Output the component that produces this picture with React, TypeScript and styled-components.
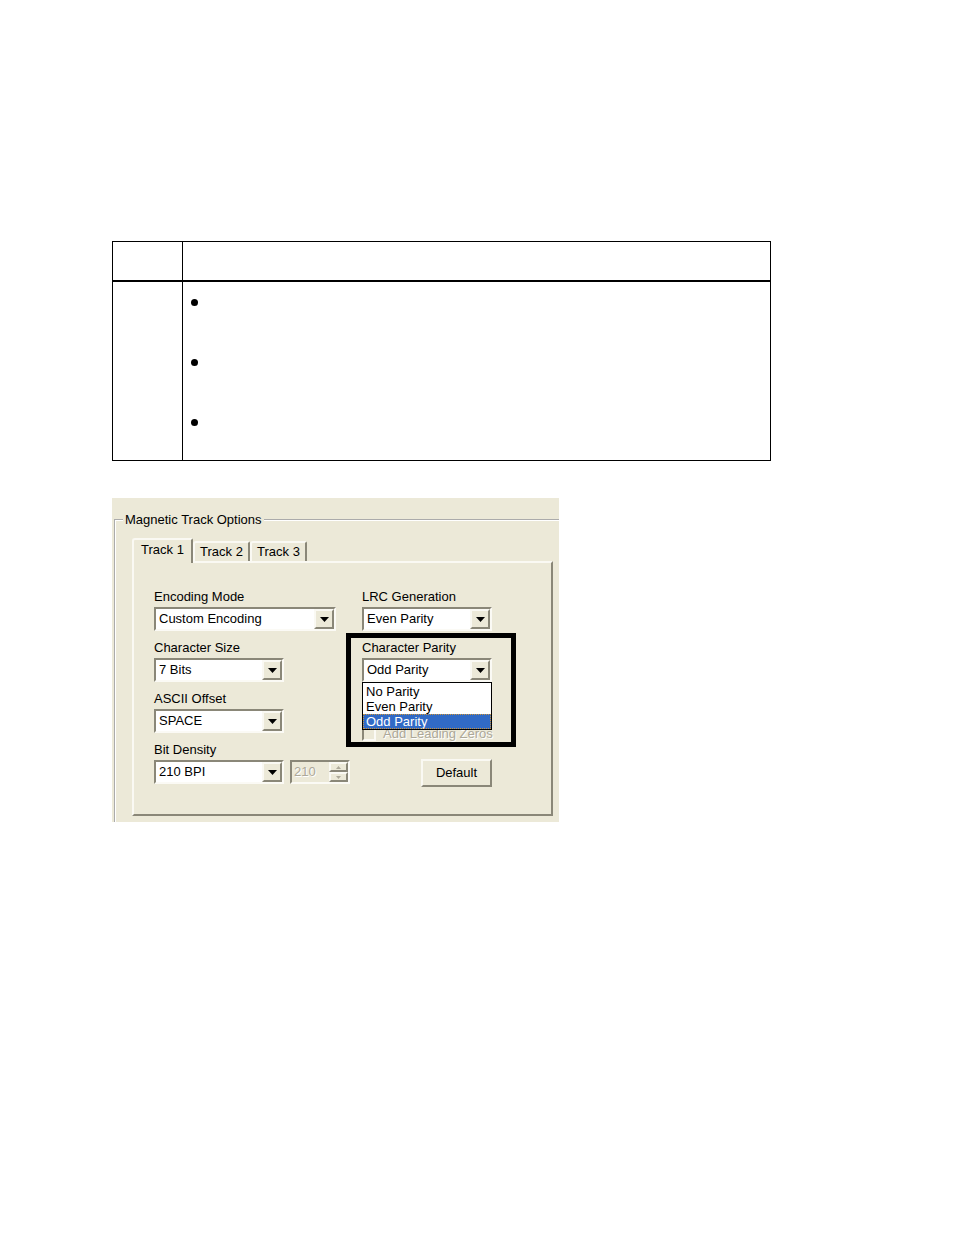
import * as React from "react";
import styled, { createGlobalStyle, css } from "styled-components";

const face = "#ece9d8";
const shadow = "#aca899";
const darkShadow = "#716f64";

const GlobalStyle = createGlobalStyle`
  *, *::before, *::after {
    box-sizing: border-box;
  }
  body {
    margin: 0;
    background: #ffffff;
    color: #000000;
  }
  body, button, input, select {
    font-family: "Liberation Sans", Arial, sans-serif;
    font-size: 13px;
    line-height: 16px;
  }
`;

const sunken = css`
  border: 2px solid;
  border-color: #8a8778 #fbfaf5 #fbfaf5 #8a8778;
`;

const raised = css`
  border: 2px solid;
  border-color: #faf9f3 #8a8778 #8a8778 #faf9f3;
`;

const Page = styled.main`
  padding: 241px 183px 40px 112px;
`;

const Steps = styled.table`
  width: 100%;
  border: 1px solid #000000;
  border-collapse: separate;
  border-spacing: 0;
  margin-bottom: 37px;
  th,
  td {
    padding: 0;
    vertical-align: top;
  }
  th {
    height: 40px;
    border-bottom: 2px solid #000000;
  }
  td {
    height: 178px;
  }
  th:first-child,
  td:first-child {
    width: 70px;
    border-right: 1px solid #000000;
  }
`;

const Bullets = styled.ul`
  display: flex;
  flex-direction: column;
  gap: 53px;
  list-style: none;
  margin: 0;
  padding: 17px 8px 0;
`;

const Bullet = styled.li`
  &::before {
    content: "";
    display: block;
    width: 7px;
    height: 7px;
    border-radius: 50%;
    background: #000000;
  }
`;

const Dialog = styled.form`
  max-width: 447px;
  padding: 14px 0 6px 2px;
  background: ${face};
`;

// The bottom padding of the dialog is covered by the left edge of the group
const Group = styled.fieldset`
  min-width: 0;
  margin: 0 0 -6px;
  padding: 0 6px 6px 7px;
  border: 2px groove #ffffff;
  border-right: 0;
  border-bottom: 0;
`;

const Legend = styled.legend`
  padding: 0 2px;
`;

const TabList = styled.div`
  display: flex;
  align-items: flex-end;
  margin: 10px 0 0 9px;
`;

const Tab = styled.button<{ $active: boolean }>`
  ${raised};
  position: relative;
  height: 20px;
  width: 57px;
  padding: 0;
  border-bottom: 0;
  border-radius: 3px 2px 0 0;
  background: ${face};
  color: #000000;
  ${props =>
    props.$active &&
    css`
      z-index: 1;
      width: 61px;
      height: 25px;
      margin-bottom: -2px;
      padding-bottom: 3px;
    `}
`;

const Panel = styled.div`
  ${raised};
  display: grid;
  grid-template-columns: 208px 130px;
  min-height: 255px;
  margin-left: 9px;
  padding: 26px 20px 0;
`;

const Column = styled.div`
  display: flex;
  flex-direction: column;
  align-items: flex-start;
  gap: 9px;
`;

const Field = styled.div`
  display: flex;
  flex-direction: column;
  gap: 2px;
  position: relative;
`;

const Label = styled.label`
  line-height: 16px;
`;

const Row = styled.div`
  display: flex;
  gap: 6px;
`;

const Combo = styled.div<{ $wide?: boolean }>`
  ${sunken};
  display: grid;
  grid-template-columns: 1fr 20px;
  width: ${props => (props.$wide ? 182 : 130)}px;
  height: 24px;
  background: #ffffff;
`;

const Select = styled.select`
  grid-area: 1 / 1 / 2 / 3;
  appearance: none;
  min-width: 0;
  padding: 0 20px 0 3px;
  border: 0;
  outline: 0;
  background: transparent;
  color: #000000;
`;

const Arrow = styled.span`
  ${raised};
  grid-area: 1 / 2 / 2 / 3;
  display: flex;
  align-items: center;
  justify-content: center;
  background: ${face};
  pointer-events: none;
`;

const Options = styled.ul`
  position: absolute;
  z-index: 2;
  top: 100%;
  left: 0;
  right: 0;
  margin: 0;
  padding: 1px 0 0;
  border: 1px solid #000000;
  background: #ffffff;
  list-style: none;
`;

const Option = styled.li<{ $selected: boolean }>`
  height: 15px;
  padding-left: 3px;
  line-height: 15px;
  ${props =>
    props.$selected &&
    css`
      background: #316ac5;
      color: #ffffff;
      outline: 1px dotted #ce953a;
      outline-offset: -1px;
    `}
`;

const Frame = styled.div`
  position: absolute;
  z-index: 3;
  top: -7px;
  left: -16px;
  width: 170px;
  height: 114px;
  border: 5px solid #000000;
  pointer-events: none;
`;

const CheckRow = styled.label`
  display: flex;
  align-items: center;
  gap: 7px;
  margin-top: 35px;
  color: ${shadow};
  text-shadow: 1px 1px 0 #ffffff;
  white-space: nowrap;
`;

const Checkbox = styled.input`
  ${sunken};
  appearance: none;
  flex: none;
  width: 14px;
  height: 14px;
  margin: 0;
  background: ${face};
`;

const Spinner = styled.div`
  ${sunken};
  display: flex;
  width: 60px;
  height: 24px;
`;

const SpinnerInput = styled.input`
  flex: 1;
  min-width: 0;
  padding: 0 0 0 2px;
  border: 0;
  background: transparent;
  color: ${shadow};
  text-shadow: 1px 1px 0 #ffffff;
`;

const SpinnerButtons = styled.div`
  display: flex;
  flex-direction: column;
  width: 19px;
`;

const SpinnerButton = styled.button`
  ${raised};
  flex: 1;
  display: flex;
  align-items: center;
  justify-content: center;
  padding: 0;
  background: ${face};
  color: ${shadow};
`;

const DefaultButton = styled.button`
  ${raised};
  align-self: flex-end;
  width: 71px;
  height: 28px;
  margin-top: 8px;
  padding: 0;
  background: ${face};
  color: #000000;
  outline-color: ${darkShadow};
`;

const ComboBox = ({
  id,
  options,
  wide
}: {
  id: string;
  options: string[];
  wide?: boolean;
}) => (
  <Combo $wide={wide}>
    <Select id={id}>
      {options.map(option => (
        <option key={option}>{option}</option>
      ))}
    </Select>
    <Arrow>
      <svg width="9" height="5" viewBox="0 0 9 5">
        <path d="M0 0H9L4.5 5Z" />
      </svg>
    </Arrow>
  </Combo>
);

const SmallArrow = ({ up }: { up?: boolean }) => (
  <svg width="5" height="3" viewBox="0 0 5 3" fill="currentColor">
    <path d={up ? "M0 3H5L2.5 0Z" : "M0 0H5L2.5 3Z"} />
  </svg>
);

const tabs = ["Track 1", "Track 2", "Track 3"];
const parities = ["No Parity", "Even Parity", "Odd Parity"];

const TrackOptions = () => {
  const [active, setActive] = React.useState("Track 1");
  return (
    <Dialog>
      <Group>
        <Legend>Magnetic Track Options</Legend>
        <TabList role="tablist">
          {tabs.map(tab => (
            <Tab
              key={tab}
              type="button"
              role="tab"
              aria-selected={tab === active}
              $active={tab === active}
              onClick={() => setActive(tab)}
            >
              {tab}
            </Tab>
          ))}
        </TabList>
        <Panel role="tabpanel">
          <Column>
            <Field>
              <Label htmlFor="encoding">Encoding Mode</Label>
              <ComboBox id="encoding" options={["Custom Encoding"]} wide />
            </Field>
            <Field>
              <Label htmlFor="size">Character Size</Label>
              <ComboBox id="size" options={["7 Bits"]} />
            </Field>
            <Field>
              <Label htmlFor="offset">ASCII Offset</Label>
              <ComboBox id="offset" options={["SPACE"]} />
            </Field>
            <Field>
              <Label htmlFor="density" id="density-label">
                Bit Density
              </Label>
              <Row>
                <ComboBox id="density" options={["210 BPI"]} />
                <Spinner>
                  <SpinnerInput
                    aria-labelledby="density-label"
                    defaultValue="210"
                    disabled
                  />
                  <SpinnerButtons>
                    <SpinnerButton type="button" disabled>
                      <SmallArrow up />
                    </SpinnerButton>
                    <SpinnerButton type="button" disabled>
                      <SmallArrow />
                    </SpinnerButton>
                  </SpinnerButtons>
                </Spinner>
              </Row>
            </Field>
          </Column>
          <Column>
            <Field>
              <Label htmlFor="lrc">LRC Generation</Label>
              <ComboBox id="lrc" options={["Even Parity"]} />
            </Field>
            <Field>
              <Label htmlFor="parity">Character Parity</Label>
              <ComboBox id="parity" options={["Odd Parity"]} />
              <Options role="listbox">
                {parities.map(parity => (
                  <Option
                    key={parity}
                    role="option"
                    aria-selected={parity === "Odd Parity"}
                    $selected={parity === "Odd Parity"}
                  >
                    {parity}
                  </Option>
                ))}
              </Options>
              <Frame />
            </Field>
            <CheckRow>
              <Checkbox type="checkbox" disabled />
              Add Leading Zeros
            </CheckRow>
            <DefaultButton type="button">Default</DefaultButton>
          </Column>
        </Panel>
      </Group>
    </Dialog>
  );
};

const App = () => (
  <Page>
    <GlobalStyle />
    <Steps>
      <thead>
        <tr>
          <th />
          <th />
        </tr>
      </thead>
      <tbody>
        <tr>
          <td />
          <td>
            <Bullets>
              <Bullet />
              <Bullet />
              <Bullet />
            </Bullets>
          </td>
        </tr>
      </tbody>
    </Steps>
    <TrackOptions />
  </Page>
);

export default App;
